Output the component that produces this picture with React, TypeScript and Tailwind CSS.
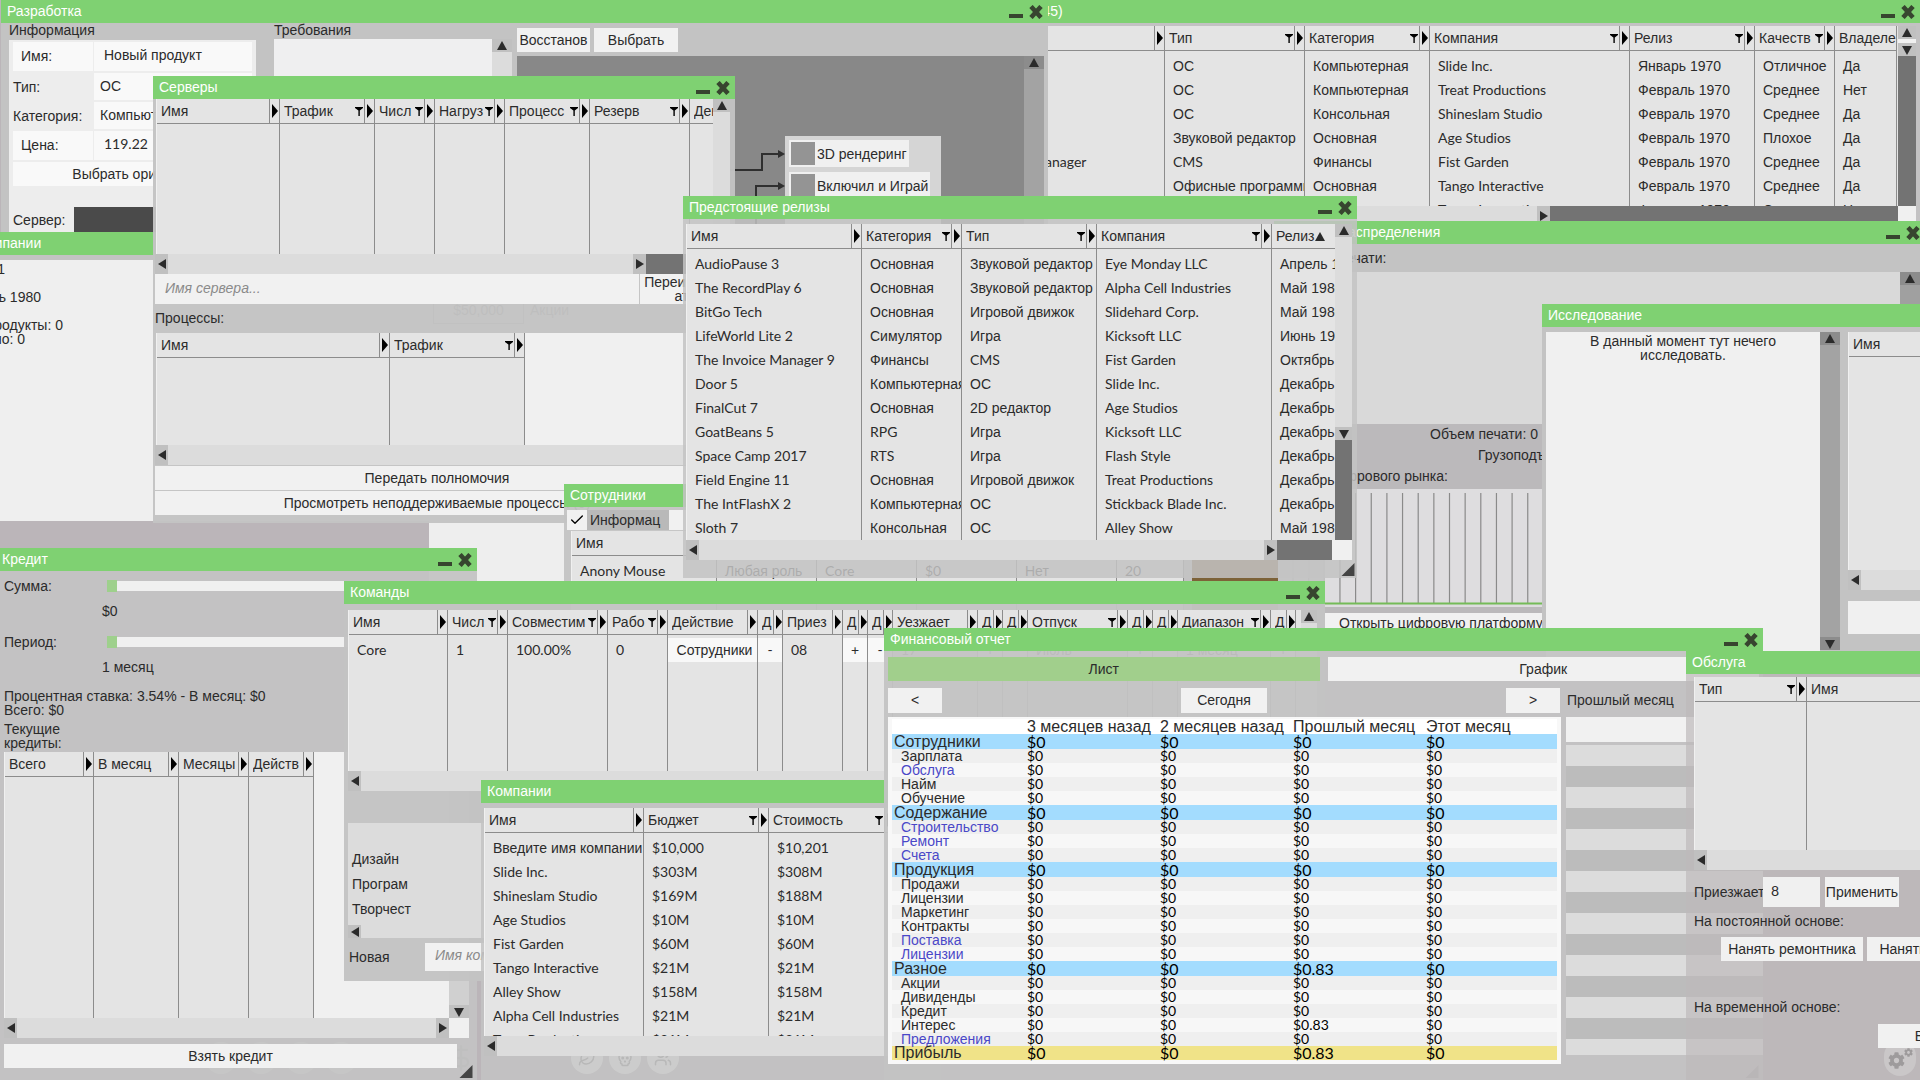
import {ReactNode} from "react";
import clsx from "clsx";
import {Check, DollarSign, Leaf, Settings, Skull, Users, Wrench} from "lucide-react";
import {FaCog} from "react-icons/fa";

type Column = {
    title: string;
    width: string;
    filter?: boolean;
    grip?: boolean;
    sorted?: boolean;
}

const hasCyrillic = (text: string) => /[А-Яа-я]/.test(text);

const textFont = (text: string) =>
    hasCyrillic(text) ? "font-['Liberation_Sans',sans-serif]" : "font-['Lato','Liberation_Sans',sans-serif]";

const Arrow = ({dir, className}: {dir: "up" | "down" | "left" | "right"; className?: string}) => {
    const shapes = {
        up: "M6 1L11 10H1Z",
        down: "M1 2H11L6 11Z",
        left: "M10 1V11L2 6Z",
        right: "M2 1L10 6L2 11Z",
    };

    return (
        <svg viewBox="0 0 12 12" className={clsx("h-3 w-3 shrink-0 fill-[#2b2b2b]", className)}>
            <path d={shapes[dir]}/>
        </svg>
    );
}

const FilterIcon = () => (
    <svg viewBox="0 0 8 10" className="h-[10px] w-2 shrink-0 fill-black">
        <path d="M0 1H8V2L4.8 4.5V10H3.4V4.5L0 2Z"/>
    </svg>
)

const Resizer = ({className}: {className?: string}) => (
    <svg viewBox="0 0 14 14" className={clsx("absolute right-1 bottom-0.5 h-[13px] w-[14px] fill-[#444]", className)}>
        <path d="M14 0V14H0Z"/>
    </svg>
)

const HScroll = ({right, thumb, className}: {right?: string; thumb?: string; className?: string}) => (
    <div className={clsx("flex h-5 shrink-0 bg-[#dcdcdc]", className)}>
        <button aria-label="Влево" className="flex w-[13px] items-center justify-center bg-[#c0c0c0]">
            <Arrow dir="left"/>
        </button>
        <div className="flex-1"/>
        {right !== undefined && (
            <button aria-label="Вправо" className="flex w-[13px] items-center justify-center bg-[#c0c0c0]">
                <Arrow dir="right"/>
            </button>
        )}
        {thumb && <div className={clsx("bg-[#737373]", thumb)}/>}
        {right && <div className={clsx("bg-[#f0f0f0]", right)}/>}
    </div>
)

const ScrollButton = ({dir, className}: {dir: "up" | "down"; className?: string}) => (
    <button
        aria-label={dir === "up" ? "Вверх" : "Вниз"}
        className={clsx("flex h-[13px] w-full shrink-0 items-center justify-center", className ?? "bg-[#c0c0c0]")}
    >
        <Arrow dir={dir}/>
    </button>
)

const PlainButton = ({children, className}: {children?: ReactNode; className?: string}) => (
    <button className={clsx("h-6 shrink-0 bg-[#f1f1f1] pb-px text-center whitespace-nowrap", className)}>
        {children}
    </button>
)

const Window = ({title, className, body, children}: {
    title: string;
    className: string;
    body?: string;
    children?: ReactNode;
}) => (
    <section className={clsx("absolute flex flex-col", className)}>
        <header className="flex h-[23px] shrink-0 items-center bg-[#7fd172] pr-[5px] pl-1.5">
            <h2 className="flex-1 pb-px whitespace-nowrap text-white">{title}</h2>
            <button aria-label="Свернуть" className="flex h-full w-5 items-end pb-[5px]">
                <span className="block h-[4px] w-[14px] bg-[#37452f]"/>
            </button>
            <button aria-label="Закрыть" className="flex h-full w-[14px] items-center">
                <svg viewBox="0 0 14 14" className="h-[14px] w-[14px] stroke-[#37452f]">
                    <path d="M2 1.5L12 12.5M12 1.5L2 12.5" strokeWidth="4.6"/>
                </svg>
            </button>
        </header>
        <div className={clsx("relative flex min-h-0 flex-1 flex-col", body ?? "bg-[#c3c3c3]/95")}>
            {children}
        </div>
    </section>
)

const DataTable = ({columns, rows, className, renderCell}: {
    columns: Column[];
    rows?: string[][];
    className?: string;
    renderCell?: (text: string, column: number) => ReactNode;
}) => (
    <div className={clsx("min-h-0 overflow-hidden border-l border-[#f0f0f0] bg-[#e4e4e4]", className)}>
        <table className="h-full w-0 table-fixed border-separate border-spacing-0">
            <colgroup>
                {columns.map((c, i) => <col key={i} className={c.width}/>)}
            </colgroup>
            <thead>
                <tr className="h-[25px]">
                    {columns.map((c, i) => (
                        <th key={i} className="border-r border-b border-[#8c8c8c] p-0 text-left font-normal">
                            <div className="flex h-6 items-center overflow-hidden pl-1 whitespace-nowrap">
                                <span className="min-w-0 flex-1 overflow-hidden pb-px">
                                    {c.title}{c.sorted && <Arrow dir="up" className="inline"/>}
                                </span>
                                {c.filter && <FilterIcon/>}
                                {c.grip !== false && (
                                    <span className={clsx("flex h-full shrink-0 items-center border-l border-[#8c8c8c]", c.title === "Д" ? "w-[9px]" : "ml-px w-[10px]")}>
                                        <svg viewBox="0 0 8 14" className="h-[14px] w-2 fill-black"><path d="M2 0L8 7L2 14Z"/></svg>
                                    </span>
                                )}
                            </div>
                        </th>
                    ))}
                </tr>
            </thead>
            <tbody>
                {rows && <tr className="h-[3px]">{columns.map((_, i) => <td key={i} className="border-r border-[#8c8c8c] p-0"/>)}</tr>}
                {rows?.map((row, r) => (
                    <tr key={r} className="h-6">
                        {row.map((text, i) => (
                            <td key={i} className={clsx("overflow-hidden border-r border-[#8c8c8c] p-0 whitespace-nowrap", textFont(text))}>
                                {renderCell ? renderCell(text, i) : <div className="pl-2">{text}</div>}
                            </td>
                        ))}
                    </tr>
                ))}
                <tr>{columns.map((_, i) => <td key={i} className="border-r border-[#8c8c8c] p-0"/>)}</tr>
            </tbody>
        </table>
    </div>
)

const Products = () => (
    <Window title="Продукты (1345)" className="top-0 left-[949px] h-[228px] w-[971px]">
        <div className="mt-[3px] mr-1 flex h-[180px]">
            <DataTable
                className="flex-1"
                columns={[
                    {title: "Имя", width: "w-[215px]"},
                    {title: "Тип", width: "w-[140px]", filter: true},
                    {title: "Категория", width: "w-[125px]", filter: true},
                    {title: "Компания", width: "w-[200px]", filter: true},
                    {title: "Релиз", width: "w-[125px]", filter: true},
                    {title: "Качеств", width: "w-[80px]", filter: true},
                    {title: "Владеле", width: "w-[62px]", grip: false},
                ]}
                rows={[
                    ["Pane", "ОС", "Компьютерная", "Slide Inc.", "Январь 1970", "Отличное", "Да"],
                    ["Mint OS", "ОС", "Компьютерная", "Treat Productions", "Февраль 1970", "Среднее", "Нет"],
                    ["Consolid", "ОС", "Консольная", "Shineslam Studio", "Февраль 1970", "Среднее", "Да"],
                    ["AudioPause", "Звуковой редактор", "Основная", "Age Studios", "Февраль 1970", "Плохое", "Да"],
                    ["The Invoice Manager", "CMS", "Финансы", "Fist Garden", "Февраль 1970", "Среднее", "Да"],
                    ["Letter Life", "Офисные программы", "Основная", "Tango Interactive", "Февраль 1970", "Среднее", "Да"],
                    ["Door", "ОС", "Компьютерная", "Tango Interactive", "Февраль 1970", "Среднее", "Нет"],
                ]}
            />
            <div className="flex w-[18px] flex-col bg-[#f0f0f0]">
                <ScrollButton dir="up"/>
                <ScrollButton dir="down" className="mt-1 bg-[#c0c0c0]"/>
                <div className="flex-1 bg-[#737373]"/>
            </div>
        </div>
        <HScroll thumb="w-[348px]" right="w-[18px]" className="mr-1"/>
    </Window>
)

const Feature = ({children}: {children: string}) => (
    <div className="flex h-[27px] w-fit items-center bg-[#f0f0f0] pr-0.5 pl-0.5">
        <span className="mr-0.5 h-[23px] w-6 bg-[#949494]"/>
        {children}
    </div>
)

const Development = () => (
    <Window title="Разработка" className="top-0 left-px h-[340px] w-[1047px]" body="bg-[#c3c3c3]">
        <div className="flex min-h-0 flex-1 pr-1 pl-2">
            <div className="mr-[18px] flex w-[247px] flex-col">
                <h3 className="h-[17px] leading-[15px]">Информация</h3>
                <div className="flex-1 bg-[#ededed] px-1 pt-0.5">
                    <div className="grid grid-cols-[80px_1fr] items-center gap-x-px gap-y-0.5">
                        <label htmlFor="product-name" className="bg-[#f9f9f9] pl-2 leading-[29px]">Имя:</label>
                        <input id="product-name" defaultValue="Новый продукт" className="h-[29px] min-w-0 bg-[#f9f9f9] pb-1 pl-2.5"/>
                        <span>Тип:</span>
                        <PlainButton className="h-[27px] bg-[#f9f9f9]! pl-1.5 text-left!">ОС</PlainButton>
                        <span>Категория:</span>
                        <PlainButton className="h-[27px] bg-[#f9f9f9]! pl-1.5 text-left!">Компьютерная</PlainButton>
                        <label htmlFor="product-price" className="bg-[#f9f9f9] pl-2 leading-[29px]">Цена:</label>
                        <input id="product-price" defaultValue="119.22" className="h-[29px] min-w-0 bg-[#f9f9f9] pb-1 pl-2.5 font-['Lato',sans-serif]"/>
                    </div>
                    <PlainButton className="mt-0.5 w-full bg-[#f9f9f9]!">Выбрать оригинал</PlainButton>
                    <div className="mt-[21px] flex items-center">
                        <span className="w-[61px]">Сервер:</span>
                        <div className="h-[25px] flex-1 bg-[#4a4a4a]"/>
                    </div>
                </div>
            </div>
            <div className="mr-[5px] flex w-[238px] flex-col">
                <h3 className="h-4 leading-[15px]">Требования</h3>
                <div className="flex flex-1 bg-[#efeff0]">
                    <div className="flex-1"/>
                    <div className="w-5 bg-[#dcdcdc]"><ScrollButton dir="up"/></div>
                </div>
            </div>
            <div className="flex flex-1 flex-col">
                <div className="mt-[5px] mb-1 flex gap-1">
                    <PlainButton className="w-[73px]">Восстанов</PlainButton>
                    <PlainButton className="w-[84px]">Выбрать</PlainButton>
                </div>
                <div className="relative flex-1 bg-[#888]">
                    <svg className="absolute top-0 left-[210px] h-[180px] w-[60px] fill-none stroke-[#2f2f2f]" strokeWidth="2">
                        <path d="M0 114H35V98H56"/>
                        <path d="M29 180V130H56"/>
                        <path d="M51 94L58 98L51 102ZM51 126L58 130L51 134Z" fill="#2f2f2f" stroke="none"/>
                    </svg>
                    <div className="absolute top-20 left-[268px] flex h-[150px] w-[156px] flex-col gap-[5px] bg-[#d5d5d5] p-1">
                        <Feature>3D рендеринг</Feature>
                        <Feature>Включил и Играй</Feature>
                    </div>
                    <div className="absolute top-0 right-0 h-full w-5 bg-[#a3a3a3]">
                        <ScrollButton dir="up" className="bg-[#8c8c8c]"/>
                    </div>
                </div>
            </div>
        </div>
    </Window>
)

const CompanyDetails = () => (
    <>
        <div className="absolute top-[250px] left-[429px] h-[332px] w-[300px] bg-[#eee] pt-[46px] pl-1">
            <div className="flex items-center gap-1.5">
                <span className="flex h-7 w-[91px] items-center justify-center border border-[#888]">$50,000</span>
                <span>Акции</span>
            </div>
        </div>
        <Window title="О компании" className="top-[232px] -left-[42px] h-[289px] w-[471px]" body="bg-[#c3c3c3]">
            <div className="mt-[5px] flex-1 bg-[#efefef]">
                <div className="flex w-[105px] flex-col items-end pt-0.5 leading-[14px] whitespace-nowrap">
                    <span className="mr-[58px] h-7">1</span>
                    <span className="mr-[22px] h-7">Январь 1980</span>
                    <span>Продукты: 0</span>
                    <span className="mr-[38px]">Продано: 0</span>
                </div>
            </div>
        </Window>
    </>
)

const Distribution = () => (
    <Window title="Система распределения" className="top-[221px] left-[1274px] h-[440px] w-[651px]" body="bg-[#bbb9bb]">
        <div className="bg-[#c3c3c3] pl-1 leading-7">Очередь печати:</div>
        <div className="flex h-[152px] bg-[#d9d9d9]">
            <div className="flex-1"/>
            <div className="mr-[5px] w-5 bg-[#a0a0a0]"><ScrollButton dir="up" className="bg-[#8c8c8c]"/></div>
        </div>
        <div className="h-[65px] pl-1 leading-[21px]">
            <div className="w-[260px] text-right">Объем печати: 0</div>
            <div className="pl-[200px]">Грузоподъемность: 0</div>
            <div>График цифрового рынка:</div>
        </div>
        <svg className="h-[118px] w-full shrink-0 bg-[#dedddf]">
            {Array.from({length: 30}, (_, i) => (
                <path key={i} d={`M${19 + i * 15.65} 4V114`} stroke="#8a8a8a" strokeWidth="1.2"/>
            ))}
            <path d="M0 114.5H640" stroke="#74bb58" strokeWidth="2"/>
        </svg>
        <PlainButton className="mt-1.5 h-5! w-[400px] pl-[65px] text-left!">Открыть цифровую платформу</PlainButton>
    </Window>
)

const Servers = () => (
    <Window title="Серверы" className="top-[76px] left-[153px] h-[447px] w-[582px]" body="bg-[#c3c3c3]/97">
        <div className="mr-[5px] ml-[3px] flex h-[155px]">
            <DataTable
                className="flex-1"
                columns={[
                    {title: "Имя", width: "w-[123px]"},
                    {title: "Трафик", width: "w-[95px]", filter: true},
                    {title: "Числ", width: "w-[60px]", filter: true},
                    {title: "Нагруз", width: "w-[70px]", filter: true},
                    {title: "Процесс", width: "w-[85px]", filter: true},
                    {title: "Резерв", width: "w-[100px]", filter: true},
                    {title: "День", width: "w-[60px]", grip: false},
                ]}
            />
            <div className="w-[17px] bg-[#dcdcdc]"><ScrollButton dir="up"/></div>
        </div>
        <HScroll thumb="w-[70px]" right="w-[14px]" className="mr-[5px] ml-0.5"/>
        <div className="mr-[5px] ml-0.5 flex h-[30px] gap-px">
            <input aria-label="Имя сервера" placeholder="Имя сервера..." className="w-[484px] bg-[#f1f1f1] pb-0.5 pl-2.5 italic placeholder:text-[#8a8a8a]"/>
            <button className="flex-1 bg-[#f1f1f1] text-center leading-[14px]">Переименов ать</button>
        </div>
        <div className="pl-0.5 leading-[29px]">Процессы:</div>
        <div className="mr-[5px] ml-[3px] flex h-[112px] bg-[#f0f0f0]">
            <DataTable
                columns={[
                    {title: "Имя", width: "w-[233px]"},
                    {title: "Трафик", width: "w-[135px]", filter: true},
                ]}
            />
        </div>
        <HScroll className="mr-[5px] ml-0.5"/>
        <PlainButton className="mt-px mr-4 ml-0.5">Передать полномочия</PlainButton>
        <PlainButton className="mt-px mr-4 ml-0.5">Просмотреть неподдерживаемые процессы (0)</PlainButton>
    </Window>
)

const Research = () => (
    <Window title="Исследование" className="top-[304px] left-[1542px] h-[356px] w-[500px]" body="bg-[#c3c3c3]">
        <div className="flex flex-1 pt-[5px] pl-1">
            <p className="flex-1 bg-[#f0f0f0] px-8 pt-0.5 text-center leading-[14px]">
                В данный момент тут нечего исследовать.
            </p>
            <div className="flex h-[318px] w-5 flex-col justify-between bg-[#a3a3a3]">
                <ScrollButton dir="up" className="bg-[#8c8c8c]"/>
                <ScrollButton dir="down" className="bg-[#8c8c8c]"/>
            </div>
            <div className="ml-2 flex w-[194px] flex-col">
                <DataTable className="h-[238px]" columns={[{title: "Имя", width: "w-[190px]"}]}/>
                <HScroll/>
                <div className="mt-[11px] h-[33px] bg-[#f0f0f0]"/>
            </div>
        </div>
    </Window>
)

const Employees = () => (
    <Window title="Сотрудники" className="top-[484px] left-[564px] h-[150px] w-[761px]">
        <div className="mt-[3px] flex h-5 pl-[3px]">
            <label className="flex w-[102px] items-center gap-[3px] bg-[#b9b9b9]">
                <span className="relative flex h-5 w-5 items-center justify-center bg-[#f1f1f1]">
                    <input type="checkbox" defaultChecked className="absolute inset-0 appearance-none"/>
                    <Check className="h-4 w-4 text-black" strokeWidth={2}/>
                </span>
                Информац
            </label>
            <PlainButton className="h-5! w-[100px]"/>
        </div>
        <div className="mt-px ml-[7px] flex flex-1">
            <DataTable
                columns={[
                    {title: "Имя", width: "w-[145px]"},
                    {title: "Роль", width: "w-[100px]"},
                    {title: "Команда", width: "w-[100px]"},
                    {title: "Зарплата", width: "w-[100px]"},
                    {title: "Жалобы", width: "w-[100px]"},
                    {title: "Возраст", width: "w-[67px]"},
                ]}
                rows={[["Anony Mouse", "Любая роль", "Core", "$0", "Нет", "20"]]}
            />
            <div className="ml-2 w-[86px] bg-[#7d6238]"/>
        </div>
    </Window>
)

const LoanSlider = ({label, value, className}: {label: string; value: string; className?: string}) => {
    const id = "loan-" + label.toLowerCase();

    return (
        <div className={clsx("grid grid-cols-[103px_360px] items-center leading-[14px]", className)}>
            <label htmlFor={id}>{label}:</label>
            <input
                id={id}
                type="range"
                defaultValue={0}
                className="h-[10px] appearance-none bg-[#f0f0f0] [&::-webkit-slider-thumb]:h-3 [&::-webkit-slider-thumb]:w-[10px] [&::-webkit-slider-thumb]:appearance-none [&::-webkit-slider-thumb]:bg-[#9ed08c]"
            />
            <output htmlFor={id} className="col-start-2 -ml-[5px] pt-[11px]">{value}</output>
        </div>
    );
}

const Loan = () => (
    <Window title="Кредит" className="top-[548px] -left-[4px] h-[532px] w-[481px]">
        <div className="flex flex-col pl-2 leading-[14px]">
            <LoanSlider label="Сумма" value="$0" className="mt-2"/>
            <LoanSlider label="Период" value="1 месяц" className="mt-[17px]"/>
            <p className="mt-[15px]">Процентная ставка: 3.54% - В месяц: $0</p>
            <p>Всего: $0</p>
            <p className="mt-[5px] w-20">Текущие кредиты:</p>
        </div>
        <div className="mt-0.5 mr-2 ml-2 flex h-[266px]">
            <div className="flex flex-1 bg-[#f0f0f0]">
                <DataTable
                    columns={[
                        {title: "Всего", width: "w-[89px]"},
                        {title: "В месяц", width: "w-[85px]"},
                        {title: "Месяцы", width: "w-[70px]"},
                        {title: "Действ", width: "w-[65px]"},
                    ]}
                />
            </div>
            <div className="flex w-5 flex-col justify-end bg-[#d0d0d0]"><ScrollButton dir="down"/></div>
        </div>
        <HScroll right="w-5" className="mr-2 ml-2"/>
        <PlainButton className="mt-1.5 ml-2 w-[453px]">Взять кредит</PlainButton>
        <Resizer/>
    </Window>
)

const Teams = () => {
    const actions = [4, 5, 7, 8, 10, 11, 13, 14, 16];

    return (
        <Window title="Команды" className="top-[581px] left-[344px] h-[400px] w-[981px]" body="bg-[#c3c3c3]/97">
            <div className="mt-1.5 mr-2 ml-1 flex h-[161px]">
                <DataTable
                    className="flex-1"
                    columns={[
                        {title: "Имя", width: "w-[99px]"},
                        {title: "Числ", width: "w-[60px]", filter: true},
                        {title: "Совместим", width: "w-[100px]", filter: true},
                        {title: "Рабо", width: "w-[60px]", filter: true},
                        {title: "Действие", width: "w-[90px]"},
                        {title: "Д", width: "w-[25px]"},
                        {title: "Приез", width: "w-[60px]"},
                        {title: "Д", width: "w-[25px]"},
                        {title: "Д", width: "w-[25px]"},
                        {title: "Уезжает", width: "w-[85px]"},
                        {title: "Д", width: "w-[25px]"},
                        {title: "Д", width: "w-[25px]"},
                        {title: "Отпуск", width: "w-[100px]", filter: true},
                        {title: "Д", width: "w-[25px]"},
                        {title: "Д", width: "w-[25px]"},
                        {title: "Диапазон", width: "w-[93px]", filter: true},
                        {title: "Д", width: "w-[25px]"},
                    ]}
                    rows={[["Core", "1", "100.00%", "0", "Сотрудники", "-", "08", "+", "-", "17", "+", "-", "Июль", "+", "-", "1 месяц", "+"]]}
                    renderCell={(text, i) => actions.includes(i)
                        ? <PlainButton className={clsx("block w-full bg-[#f8f8f8]!", i === 4 && "pl-1")}>{text}</PlainButton>
                        : <div className="pl-2">{text}</div>}
                />
                <div className="w-4 bg-[#dcdcdc]"><ScrollButton dir="up"/></div>
            </div>
            <HScroll className="mr-2 ml-1"/>
            <div className="mt-8 mr-2 ml-1 flex h-[102px] flex-col bg-[#dcdcdc] pt-6 pl-1 leading-[25px]">
                <span>Дизайн</span>
                <span>Програм</span>
                <span>Творчест</span>
            </div>
            <HScroll className="mr-2 ml-1 h-[13px]!"/>
            <div className="mt-[5px] ml-[5px] flex h-7 items-center">
                <label htmlFor="new-team" className="w-[76px]">Новая</label>
                <input id="new-team" placeholder="Имя команды..." className="h-full w-[300px] bg-[#f1f1f1] pb-1 pl-2.5 italic placeholder:text-[#8a8a8a]"/>
            </div>
        </Window>
    );
}

const Companies = () => (
    <Window title="Компании" className="top-[780px] left-[481px] h-[300px] w-[460px]" body="bg-[#c3c3c3]/85">
        <div className="mt-[5px] ml-[3px] flex h-[228px]">
            <DataTable
                className="flex-1"
                columns={[
                    {title: "Имя", width: "w-[159px]"},
                    {title: "Бюджет", width: "w-[125px]", filter: true},
                    {title: "Стоимость", width: "w-[126px]", filter: true},
                ]}
                rows={[
                    ["Введите имя компании", "$10,000", "$10,201"],
                    ["Slide Inc.", "$303M", "$308M"],
                    ["Shineslam Studio", "$169M", "$188M"],
                    ["Age Studios", "$10M", "$10M"],
                    ["Fist Garden", "$60M", "$60M"],
                    ["Tango Interactive", "$21M", "$21M"],
                    ["Alley Show", "$158M", "$158M"],
                    ["Alpha Cell Industries", "$21M", "$21M"],
                    ["Treat Productions", "$31M", "$31M"],
                ]}
            />
        </div>
        <HScroll className="ml-[3px]"/>
    </Window>
)

const Releases = () => (
    <Window title="Предстоящие релизы" className="top-[196px] left-[683px] h-[382px] w-[674px]" body="bg-[#c3c3c3]/85">
        <div className="mt-[5px] mr-[5px] ml-[3px] flex h-[316px]">
            <DataTable
                className="flex-1"
                columns={[
                    {title: "Имя", width: "w-[175px]"},
                    {title: "Категория", width: "w-[100px]", filter: true},
                    {title: "Тип", width: "w-[135px]", filter: true},
                    {title: "Компания", width: "w-[175px]", filter: true},
                    {title: "Релиз", width: "w-[100px]", grip: false, sorted: true},
                ]}
                rows={[
                    ["AudioPause 3", "Основная", "Звуковой редактор", "Eye Monday LLC", "Апрель 1980"],
                    ["The RecordPlay 6", "Основная", "Звуковой редактор", "Alpha Cell Industries", "Май 1980"],
                    ["BitGo Tech", "Основная", "Игровой движок", "Slidehard Corp.", "Май 1980"],
                    ["LifeWorld Lite 2", "Симулятор", "Игра", "Kicksoft LLC", "Июнь 1980"],
                    ["The Invoice Manager 9", "Финансы", "CMS", "Fist Garden", "Октябрь 1980"],
                    ["Door 5", "Компьютерная", "ОС", "Slide Inc.", "Декабрь 1980"],
                    ["FinalCut 7", "Основная", "2D редактор", "Age Studios", "Декабрь 1980"],
                    ["GoatBeans 5", "RPG", "Игра", "Kicksoft LLC", "Декабрь 1980"],
                    ["Space Camp 2017", "RTS", "Игра", "Flash Style", "Декабрь 1980"],
                    ["Field Engine 11", "Основная", "Игровой движок", "Treat Productions", "Декабрь 1980"],
                    ["The IntFlashX 2", "Компьютерная", "ОС", "Stickback Blade Inc.", "Декабрь 1980"],
                    ["Sloth 7", "Консольная", "ОС", "Alley Show", "Май 1981"],
                ]}
            />
            <div className="flex w-[17px] flex-col bg-[#dcdcdc]">
                <ScrollButton dir="up"/>
                <div className="flex-1"/>
                <ScrollButton dir="down"/>
                <div className="h-[100px] bg-[#737373]"/>
            </div>
        </div>
        <HScroll thumb="w-[55px]" right="w-5" className="mr-[5px] ml-[3px]"/>
        <Resizer className="right-0.5!"/>
    </Window>
)

type ReportGroup = {
    name: string;
    total?: string;
    items: {name: string; link?: boolean; last?: string}[];
}

const report: ReportGroup[] = [
    {name: "Сотрудники", items: [{name: "Зарплата"}, {name: "Обслуга", link: true}, {name: "Найм"}, {name: "Обучение"}]},
    {name: "Содержание", items: [{name: "Строительство", link: true}, {name: "Ремонт", link: true}, {name: "Счета", link: true}]},
    {
        name: "Продукция",
        items: [
            {name: "Продажи"}, {name: "Лицензии"}, {name: "Маркетинг"}, {name: "Контракты"},
            {name: "Поставка", link: true}, {name: "Лицензии", link: true},
        ],
    },
    {
        name: "Разное",
        total: "$0.83",
        items: [
            {name: "Акции"}, {name: "Дивиденды"}, {name: "Кредит"},
            {name: "Интерес", last: "$0.83"}, {name: "Предложения", link: true},
        ],
    },
    {name: "Прибыль", total: "$0.83", items: []},
];

const ReportTable = () => {
    const valueCells = (last = "$0") => ["$0", "$0", last, "$0"].map((v, i) => (
        <td key={i} className="p-0 font-['Lato',sans-serif] text-black">{v}</td>
    ));

    return (
        <table className="w-[665px] table-fixed border-collapse">
            <colgroup>
                <col className="w-[135px]"/>
                <col span={3} className="w-[133px]"/>
                <col/>
            </colgroup>
            <thead>
                <tr className="h-[15px] bg-white text-[16px] leading-[15px] whitespace-nowrap">
                    <td className="p-0"/>
                    {["3 месяцев назад", "2 месяцев назад", "Прошлый месяц", "Этот месяц"].map(t => (
                        <th key={t} className="p-0 text-left font-normal">{t}</th>
                    ))}
                </tr>
            </thead>
            {report.map(group => (
                <tbody key={group.name} className="leading-[14px]">
                    <tr className={clsx("text-[16px]", group.items.length ? "h-[15px] bg-[#a3dcfe]" : "h-[14px] bg-[#f0e388]")}>
                        <th className="p-0 pl-0.5 text-left font-normal">{group.name}</th>
                        {valueCells(group.total)}
                    </tr>
                    {group.items.map((item, i) => (
                        <tr key={i} className={clsx("h-[14px]", i % 2 ? "bg-[#f7f7f7]" : "bg-[#efefef]")}>
                            <th className="p-0 pl-[9px] text-left font-normal">
                                {item.link ? <a href="#" className="text-[#4a48c8]">{item.name}</a> : item.name}
                            </th>
                            {valueCells(item.last)}
                        </tr>
                    ))}
                </tbody>
            ))}
        </table>
    );
}

const FinanceReport = () => (
    <Window title="Финансовый отчет" className="top-[628px] left-[884px] h-[452px] w-[879px]" body="bg-[#c3c3c3]/95">
        <div className="mt-1.5 flex gap-2 px-1">
            <PlainButton className="flex-1 bg-[#a1cf8c]!">Лист</PlainButton>
            <PlainButton className="flex-1">График</PlainButton>
        </div>
        <div className="mt-[7px] flex px-1">
            <div className="flex w-[672px] justify-between">
                <PlainButton className="h-[25px]! w-[54px]">&lt;</PlainButton>
                <PlainButton className="h-[25px]! w-[86px]">Сегодня</PlainButton>
                <PlainButton className="h-[25px]! w-[54px]">&gt;</PlainButton>
            </div>
            <span className="ml-[7px] leading-[25px]">Прошлый месяц</span>
        </div>
        <div className="mt-1 flex gap-[5px] pl-1">
            <div className="h-[347px] w-[673px] bg-[#f8f8f8] px-1 pt-0.5">
                <ReportTable/>
            </div>
            <div className="h-[338px] flex-1 overflow-hidden">
                <div className="mb-[3px] h-[25px] bg-[#f1f1f1]"/>
                {Array.from({length: 15}, (_, i) => (
                    <div key={i} className={clsx("h-[21px]", i % 2 ? "bg-[#bcbcbc]" : "bg-[#dcdcdc]")}/>
                ))}
            </div>
        </div>
        <Resizer className="fill-[#b0b0b0]!"/>
    </Window>
)

const Maintenance = () => (
    <Window title="Обслуга" className="top-[651px] left-[1686px] h-[429px] w-[376px]" body="bg-[#bdb9bb]/70">
        <div className="mt-[3px] ml-2 flex h-[173px]">
            <DataTable
                columns={[
                    {title: "Тип", width: "w-[112px]", filter: true},
                    {title: "Имя", width: "w-[250px]"},
                ]}
            />
        </div>
        <HScroll className="ml-2"/>
        <div className="mt-[7px] flex h-[30px] items-center pl-2">
            <label htmlFor="arrival" className="w-[69px] whitespace-nowrap">Приезжает</label>
            <input id="arrival" defaultValue="8" className="h-full w-[57px] bg-[#f0f0f0] pb-1 pl-2 font-['Lato',sans-serif]"/>
            <PlainButton className="ml-[5px] h-full! w-[74px]">Применить</PlainButton>
        </div>
        <div className="pl-2 leading-[28px]">На постоянной основе:</div>
        <div className="mt-0.5 flex gap-1 pl-[35px]">
            <PlainButton className="w-[142px]">Нанять ремонтника</PlainButton>
            <PlainButton className="w-[140px]">Нанять уборщика</PlainButton>
        </div>
        <div className="mt-8 pl-2 leading-[28px]">На временной основе:</div>
        <PlainButton className="mt-[3px] ml-[192px] w-[128px]">Вызвать</PlainButton>
    </Window>
)

const Toolbar = () => (
    <div className="absolute inset-x-0 bottom-0 flex h-11 items-center text-[#777]">
        <div className="ml-[205px] flex gap-2">
            {[Leaf, Users, Settings, Wrench].map((Icon, i) => (
                <span key={i} className="flex h-8 w-8 items-center justify-center rounded-full bg-white"><Icon size={20}/></span>
            ))}
        </div>
        <DollarSign size={28} className="ml-[90px]"/>
        <div className="ml-24 flex gap-1.5">
            {[Leaf, Skull, Users].map((Icon, i) => (
                <span key={i} className="flex h-8 w-8 items-center justify-center rounded-full bg-white"><Icon size={18}/></span>
            ))}
        </div>
        <span className="mr-1 ml-auto flex h-9 w-8 items-center justify-center rounded-full bg-[#e6e6e6] text-[#555]">
            <FaCog size={17} className="mt-1"/>
            <FaCog size={9} className="mb-3 -ml-px"/>
        </span>
    </div>
)

const App = () => {
    return (
        <main className="relative h-screen overflow-hidden bg-[#bbb5b9] font-['Liberation_Sans',sans-serif] text-[14px] leading-5 text-[#2b2b2b]">
            <Toolbar/>
            <Products/>
            <Development/>
            <CompanyDetails/>
            <Distribution/>
            <Servers/>
            <Research/>
            <Employees/>
            <Loan/>
            <Teams/>
            <Companies/>
            <Releases/>
            <FinanceReport/>
            <Maintenance/>
        </main>
    );
}

export default App;
